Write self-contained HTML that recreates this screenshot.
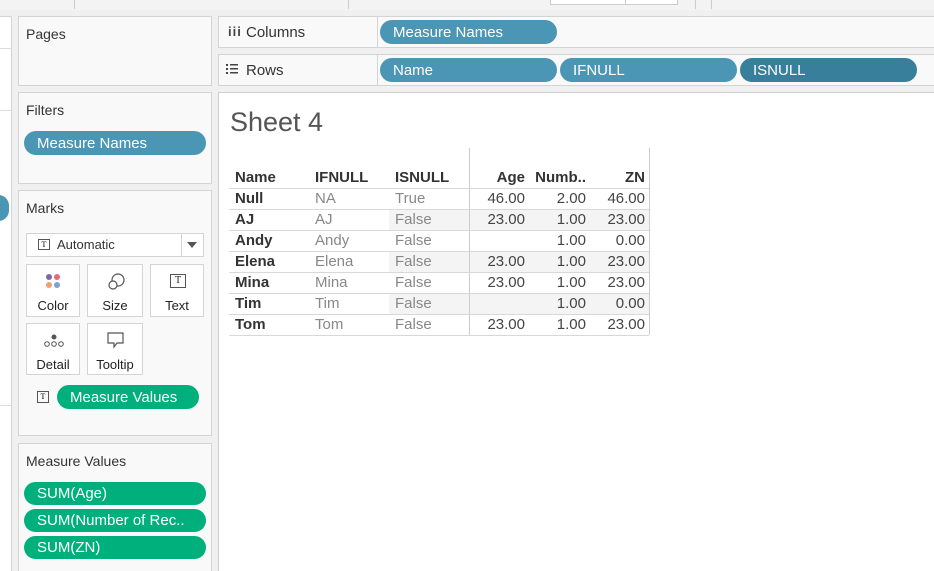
<!DOCTYPE html>
<html><head><style>
*{box-sizing:border-box;margin:0;padding:0}
html,body{width:934px;height:571px;overflow:hidden}
body{background:#f0f0f0;font-family:"Liberation Sans",sans-serif;position:relative}
.a{position:absolute}
.panel{position:absolute;background:#f9f9f9;border:1px solid #d4d4d4}
.lbl{position:absolute;font-size:14px;color:#333}
.pill{position:absolute;height:23px;border-radius:12px;color:#fff;font-size:14px;line-height:24px;padding-left:13px;white-space:nowrap;overflow:hidden}
.blue{background:#4a96b4}.dblue{background:#387f9c}.green{background:#00b07c}
.btn{position:absolute;border:1px solid #d4d4d4;background:#fff;font-size:13px;color:#222;text-align:center}
.tc{position:absolute;font-size:15px}
</style></head><body>
<div class="a" style="left:0;top:0;width:934px;height:10px;background:#f3f3f3"></div>
<div class="a" style="left:74px;top:0;width:1px;height:9px;background:#ccc"></div>
<div class="a" style="left:348px;top:0;width:1px;height:9px;background:#ccc"></div>
<div class="a" style="left:550px;top:0;width:128px;height:5px;border:1px solid #ccc;border-top:none;background:#fff"></div>
<div class="a" style="left:625px;top:0;width:1px;height:5px;background:#ccc"></div>
<div class="a" style="left:695px;top:0;width:1px;height:9px;background:#ccc"></div>
<div class="a" style="left:711px;top:0;width:1px;height:9px;background:#ccc"></div>
<div class="a" style="left:0;top:16px;width:12px;height:555px;background:#fff;border-right:1px solid #d4d4d4;border-top:1px solid #d4d4d4"></div>
<div class="a" style="left:0;top:48px;width:11px;height:1px;background:#ddd"></div>
<div class="a" style="left:0;top:110px;width:11px;height:1px;background:#ddd"></div>
<div class="a" style="left:0;top:405px;width:11px;height:1px;background:#ddd"></div>
<div class="a" style="left:-12px;top:195px;width:21px;height:26px;border-radius:13px;background:#4a96b4"></div>
<div class="panel" style="left:18px;top:16px;width:194px;height:70px"></div>
<div class="lbl" style="left:26px;top:26px">Pages</div>
<div class="panel" style="left:18px;top:92px;width:194px;height:92px"></div>
<div class="lbl" style="left:26px;top:102px">Filters</div>
<div class="pill blue" style="left:24px;top:131px;width:182px;height:24px;line-height:25px;font-size:15px">Measure Names</div>
<div class="panel" style="left:18px;top:190px;width:194px;height:246px"></div>
<div class="lbl" style="left:26px;top:200px">Marks</div>
<div class="a" style="left:26px;top:233px;width:178px;height:24px;border:1px solid #d4d4d4;background:#fff"></div>
<div class="a" style="left:181px;top:233px;width:1px;height:24px;background:#d4d4d4"></div>
<div class="a" style="left:187px;top:242px;border-left:5px solid transparent;border-right:5px solid transparent;border-top:6px solid #555"></div>
<div class="a" style="left:38px;top:239px;width:12px;height:11px;border:1px solid #555;font-size:8px;line-height:9px;text-align:center;font-family:'Liberation Serif',serif">T</div>
<div class="a" style="left:57px;top:237px;font-size:13px;color:#333">Automatic</div>
<div class="btn" style="left:26px;top:264px;width:54px;height:53px"><div style="position:absolute;left:19px;top:9px;width:16px;height:16px">
<span class="a" style="left:0;top:0;width:6px;height:6px;border-radius:3px;background:#7a6aa0"></span><span class="a" style="left:8px;top:0;width:6px;height:6px;border-radius:3px;background:#e8697a"></span><span class="a" style="left:0;top:8px;width:6px;height:6px;border-radius:3px;background:#f0a070"></span><span class="a" style="left:8px;top:8px;width:6px;height:6px;border-radius:3px;background:#7ba3d0"></span></div><div style="position:absolute;left:0;right:0;top:33px">Color</div></div>
<div class="btn" style="left:87px;top:264px;width:56px;height:53px"><svg class="a" style="left:19px;top:7px" width="18" height="18"><circle cx="11" cy="8" r="6" fill="none" stroke="#555" stroke-width="1.2"/><circle cx="6" cy="13" r="4" fill="#fff" stroke="#555" stroke-width="1.2"/></svg><div style="position:absolute;left:0;right:0;top:33px">Size</div></div>
<div class="btn" style="left:150px;top:264px;width:54px;height:53px"><div class="a" style="left:19px;top:9px;width:16px;height:14px;border:1px solid #555;font-size:10px;line-height:12px;font-family:'Liberation Serif',serif">T</div><div style="position:absolute;left:0;right:0;top:33px">Text</div></div>
<div class="btn" style="left:26px;top:323px;width:54px;height:52px"><svg class="a" style="left:16px;top:10px" width="22" height="14"><circle cx="11" cy="3" r="2.5" fill="#555"/><circle cx="4" cy="10" r="2.3" fill="none" stroke="#555"/><circle cx="11" cy="10" r="2.3" fill="none" stroke="#555"/><circle cx="18" cy="10" r="2.3" fill="none" stroke="#555"/></svg><div style="position:absolute;left:0;right:0;top:33px">Detail</div></div>
<div class="btn" style="left:87px;top:323px;width:56px;height:52px"><svg class="a" style="left:18px;top:7px" width="20" height="18"><path d="M2 2H17V12H11L8 16V12H2Z" fill="none" stroke="#555" stroke-width="1.2"/></svg><div style="position:absolute;left:0;right:0;top:33px">Tooltip</div></div>
<div class="a" style="left:37px;top:391px;width:12px;height:12px;border:1px solid #555;font-size:8px;line-height:10px;text-align:center;font-family:'Liberation Serif',serif">T</div>
<div class="pill green" style="left:57px;top:385px;width:142px;height:24px;line-height:25px;font-size:15px">Measure Values</div>
<div class="panel" style="left:18px;top:443px;width:194px;height:140px"></div>
<div class="lbl" style="left:26px;top:453px">Measure Values</div>
<div class="pill green" style="left:24px;top:482px;width:182px;font-size:15px">SUM(Age)</div>
<div class="pill green" style="left:24px;top:509px;width:182px;font-size:15px">SUM(Number of Rec..</div>
<div class="pill green" style="left:24px;top:536px;width:182px;font-size:15px">SUM(ZN)</div>
<div class="panel" style="left:218px;top:16px;width:720px;height:32px"></div>
<div class="a" style="left:377px;top:17px;width:1px;height:30px;background:#d4d4d4"></div>
<div class="a" style="left:228px;top:24px;font-size:13px;font-weight:bold;color:#444;letter-spacing:1px">iii</div>
<div class="lbl" style="left:246px;top:24px;font-size:15px">Columns</div>
<div class="pill blue" style="left:380px;top:20px;width:177px;height:24px;line-height:26px;font-size:15px">Measure Names</div>
<div class="panel" style="left:218px;top:54px;width:720px;height:32px"></div>
<div class="a" style="left:377px;top:55px;width:1px;height:30px;background:#d4d4d4"></div>
<svg class="a" style="left:226px;top:64px" width="13" height="11"><g fill="#444"><rect x="0" y="0" width="2" height="2"/><rect x="0" y="4" width="2" height="2"/><rect x="0" y="8" width="2" height="2"/><rect x="4" y="0" width="8" height="1.5"/><rect x="4" y="4" width="8" height="1.5"/><rect x="4" y="8" width="8" height="1.5"/></g></svg>
<div class="lbl" style="left:246px;top:62px;font-size:15px">Rows</div>
<div class="pill blue" style="left:380px;top:58px;width:177px;height:24px;line-height:26px;font-size:15px">Name</div>
<div class="pill blue" style="left:560px;top:58px;width:177px;height:24px;line-height:26px;font-size:15px">IFNULL</div>
<div class="pill dblue" style="left:740px;top:58px;width:177px;height:24px;line-height:26px;font-size:15px">ISNULL</div>
<div class="a" style="left:218px;top:92px;width:720px;height:490px;background:#fff;border:1px solid #cfcfcf"></div>
<div class="a" style="left:230px;top:107px;font-size:27px;color:#555">Sheet 4</div>
<div class="a" style="left:469px;top:148px;width:1px;height:187px;background:#ccc"></div>
<div class="a" style="left:649px;top:148px;width:1px;height:187px;background:#ccc"></div>
<div class="tc" style="left:235px;top:169px;color:#333;font-weight:bold">Name</div>
<div class="tc" style="left:315px;top:169px;color:#333;font-weight:bold">IFNULL</div>
<div class="tc" style="left:395px;top:169px;color:#333;font-weight:bold">ISNULL</div>
<div class="tc" style="left:470px;top:169px;width:55px;text-align:right;color:#333;font-weight:bold">Age</div>
<div class="tc" style="left:526px;top:169px;width:60px;text-align:right;color:#333;font-weight:bold">Numb..</div>
<div class="tc" style="left:586px;top:169px;width:59px;text-align:right;color:#333;font-weight:bold">ZN</div>
<div id="rows"></div>
<script>
var d=[["Null","NA","True","46.00","2.00","46.00"],["AJ","AJ","False","23.00","1.00","23.00"],["Andy","Andy","False","","1.00","0.00"],["Elena","Elena","False","23.00","1.00","23.00"],["Mina","Mina","False","23.00","1.00","23.00"],["Tim","Tim","False","","1.00","0.00"],["Tom","Tom","False","23.00","1.00","23.00"]];
var h="";
for(var i=0;i<7;i++){var y=188+i*21;
h+='<div class="a" style="left:229px;top:'+y+'px;width:420px;height:1px;background:#d8d8d8"></div>';
if(i%2==1)h+='<div class="a" style="left:389px;top:'+(y+1)+'px;width:260px;height:20px;background:#f4f4f4"></div><div class="a" style="left:469px;top:'+(y+1)+'px;width:1px;height:20px;background:#ccc"></div>';
var t=y+2,r=d[i];
h+='<div class="tc" style="left:235px;top:'+t+'px;color:#333;font-weight:bold">'+r[0]+'</div>';
h+='<div class="tc" style="left:315px;top:'+t+'px;color:#888">'+r[1]+'</div>';
h+='<div class="tc" style="left:395px;top:'+t+'px;color:#888">'+r[2]+'</div>';
h+='<div class="tc" style="left:470px;top:'+t+'px;width:55px;text-align:right;color:#444">'+r[3]+'</div>';
h+='<div class="tc" style="left:526px;top:'+t+'px;width:60px;text-align:right;color:#444">'+r[4]+'</div>';
h+='<div class="tc" style="left:586px;top:'+t+'px;width:59px;text-align:right;color:#444">'+r[5]+'</div>';}
h+='<div class="a" style="left:229px;top:335px;width:420px;height:1px;background:#d8d8d8"></div>';
document.getElementById("rows").innerHTML=h;
</script>
</body></html>
